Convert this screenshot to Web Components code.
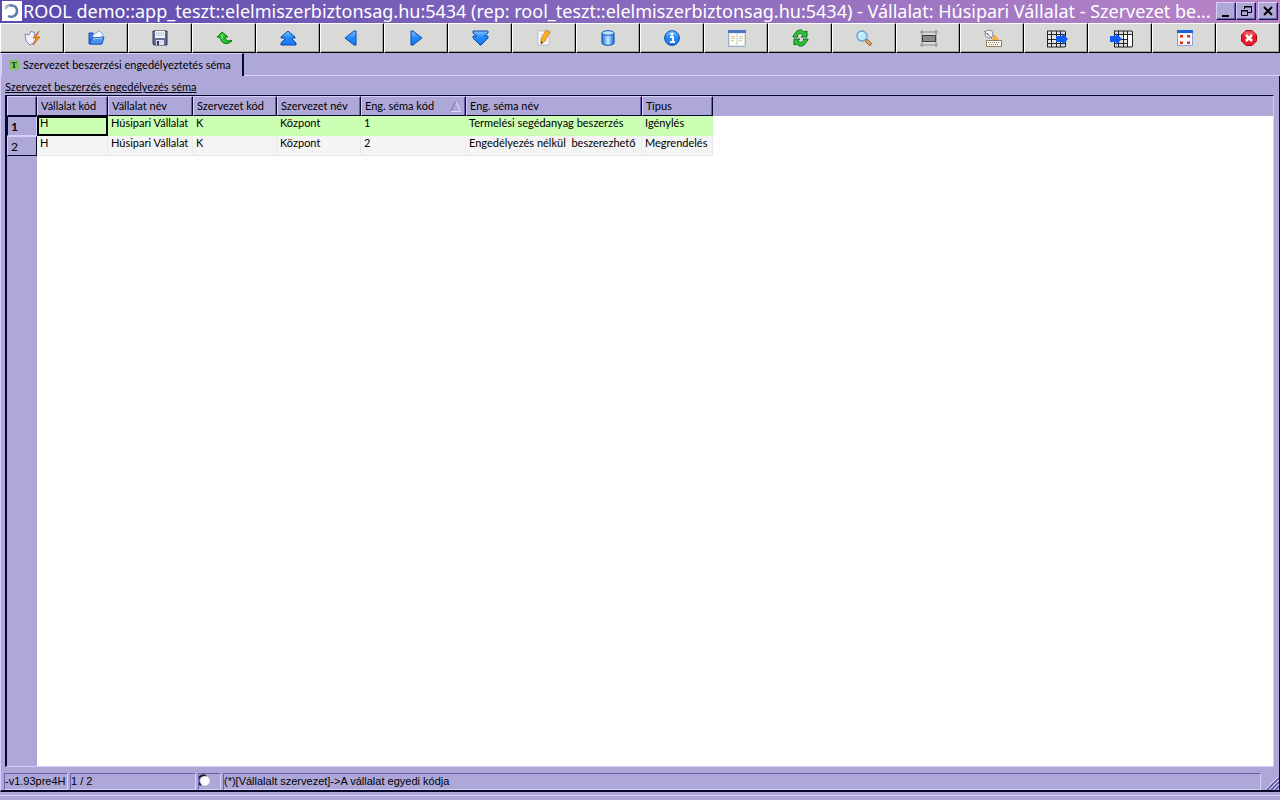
<!DOCTYPE html>
<html lang="hu">
<head>
<meta charset="utf-8">
<title>ROOL demo</title>
<style>
html, body { height: 100%; margin: 0; }
body {
  --face: #aea8d9; --light: #d6d0f8; --shade: #6a5fae; --dark: #08082c;
  font: 11px/14px Lato, "Liberation Sans", sans-serif; color: #000;
  background: var(--face);
}
</style>
</head>
<body>
<rool-app></rool-app>

<script>
const define = (name, css, html, setup) => {
  const tpl = document.createElement('template');
  tpl.innerHTML = `<style>*{box-sizing:border-box}${css}</style>${html}`;
  customElements.define(name, class extends HTMLElement {
    connectedCallback() {
      if (this.shadowRoot) return;
      this.attachShadow({ mode: 'open' }).append(tpl.content.cloneNode(true));
      if (setup) setup(this, this.shadowRoot);
    }
  });
};

/* 16px-high toolbar pictures */
const blue = 'fill="url(#b)" stroke="#0646b4"';
const sheetGrid = '<path d="M1 1h18v16H1z" fill="#dfe4e0"/><path d="M1 4.500h18M1 9.500h18M1 13.500h18M1 17h18M1 1h18M1.500 1v16M5.500 1v16M10.500 1v16M14.500 1v16M19.500 1v16" fill="none" stroke="#222" stroke-width="1"/>';
const icons = {
  connect: '<path d="M1 4l4 1 2-4 4 2-1 2 2 2-1 5-5 3-4-4z" fill="#eef0fc" stroke="#8088bc"/><path d="M15 1L9 8h3l-3 7 7-8h-4z" fill="#ff9818" stroke="#b85800" stroke-width=".7"/>',
  open: '<path d="M1 3h4l1 2h7v9H1z" fill="#3c78dc" stroke="#1c50b0"/><path d="M5 5l6-4 4 3-2 6H5z" fill="#f4f8ff" stroke="#8cb0e8"/><path d="M2 14l2-6 12-1-2 7z" fill="#4c94f0" stroke="#1858c0"/><path d="M5 9l9-1" stroke="#b4d8ff"/>',
  save: '<path d="M1 1h14v14H2l-1-1z" fill="#686c94" stroke="#30345c"/><path d="M3 1h10v7H3z" fill="#f0f2fa"/><path d="M4 3h8M4 5h8" stroke="#b8bcd0"/><path d="M4 10h8v5H4z" fill="#dcdfec"/><path d="M5 11h2v4H5z" fill="#34385c"/>',
  undo: '<path d="M6 2L1 7l3 .5C5 13 10 16 16 11l-1-1c-3 2-6 0-6-3h3z" fill="#28c030" stroke="#087818"/><path d="M6 4v5" stroke="#a0f090"/>',
  first: `<path d="M8 1l7 6v1h-3v1l4 4v2H1v-2l4-4V8H1V7z" ${blue}/>`,
  prev: `<path d="M12 1v14h-2L1 8l9-7z" ${blue}/>`,
  next: `<path d="M3 1v14h2l9-7-9-7z" ${blue}/>`,
  last: `<path d="M1 1h15v2l-4 3h4v2l-7 7H8L1 8V6h4L1 3z" ${blue}/>`,
  edit: '<path d="M2 1h11v14H2z" fill="#fafaff" stroke="#b4b8cc" stroke-width=".8"/><path d="M4 5h7M4 8h7M4 11h7" stroke="#ccd4e8"/><path d="M10 0l4 2-5 9-4 3v-5z" fill="#ffb020" stroke="#b87410" stroke-width=".7"/><path d="M5 14v-3l2 2z" fill="#333"/>',
  db: '<path d="M2 3v10c0 3 12 3 12 0V3z" fill="url(#c)" stroke="#0c50b4"/><ellipse cx="8" cy="3" rx="6" ry="2.3" fill="#b8e0ff" stroke="#1458bc"/>',
  info: '<circle cx="8" cy="8" r="7.4" fill="url(#b)" stroke="#104cac"/><circle cx="8" cy="4" r="1.6" fill="#fff"/><path d="M6 7h3v5M6 12h5" stroke="#fff" stroke-width="1.8" fill="none"/>',
  form: '<path d="M.5.5h17v16H.5z" fill="#dce2ea" stroke="#9cb0d0"/><path d="M0 0h18v3H0z" fill="#4c78c4"/><path d="M2 4h6v11H2zM10 4h6v11h-6z" fill="#fffef4"/><path d="M3 6.500h4M3 8.500h4M3 10.500h3M11 6.500h4M11 8.500h4M11 10.500h3" stroke="#d8c890"/>',
  refresh: '<path d="M1 6L5 1c3-2 6-1 7 1l3-1v6H9l2-2C9 3 7 3 5 6l1 1H1z" fill="#30c438" stroke="#08741c"/><path d="M16 10l-4 5c-3 2-6 1-7-1l-3 1V9h6l-2 2c2 2 4 2 6-1l-1-1h5z" fill="#30c438" stroke="#08741c"/>',
  find: '<circle cx="6" cy="6" r="5" fill="#bce8fc" stroke="#70a0d0" stroke-width="1.4"/><path d="M3 5l3-2" stroke="#fff"/><path d="M10 10l5 5" stroke="#8c5420" stroke-width="3.6"/><path d="M10.500 10.500l4 4" stroke="#f0b45c" stroke-width="1.8"/>',
  frame: '<path d="M0 2h18M0 15h18M2 0v17M16 0v17" stroke="#888ea4" stroke-width="1.2"/><path d="M2.500 5.500h13v6h-13z" fill="#8c8c8c" stroke="#3c3c3c"/>',
  tools: '<circle cx="5" cy="4" r="4" fill="#eef0f4" stroke="#8890a0"/><path d="M3 3l5 6M0 1l4 4" stroke="#777f90"/><path d="M10 4l5 6H8z" fill="#f4a838"/><path d="M2.500 10.500h15v6h-15z" fill="#fffdf0" stroke="#8c7c58"/><path d="M4 12.500h12M5 14.500h10" stroke="#777" stroke-dasharray="1 1"/>',
  exportgrid: sheetGrid + '<path d="M10 6h6V3l6 6-6 6v-3h-6z" fill="#0c5cf4"/>',
  importgrid: '<g transform="translate(3 0)">' + sheetGrid + '<path d="M11 5h3v4h-3M15 5h4v11h-4z" fill="#fff"/></g><path d="M0 6h6V3l6 6-6 6v-3H0z" fill="#0c5cf4"/>',
  full: '<path d="M.5.5h15v15H.5z" fill="#f4f6fc" stroke="#8ca0d8"/><path d="M0 0h16v3H0z" fill="#1c60dc"/><path d="M3 5h3v3L5 7 3 8zM13 5v3l-2-1-1 1V5zM3 14v-3l2 1 1-1v3zM13 14h-3v-3l1 1 2-1z" fill="#e02c20"/>',
  exit: '<path d="M5 .5h6L15.500 5v6L11 15.500H5L.5 11V5z" fill="#e81c2c" stroke="#a80c18"/><path d="M5 1.500h6L14 5H2z" fill="#f87880" opacity=".6"/><path d="M5 5l6 6M11 5l-6 6" stroke="#fff" stroke-width="2.6"/>'
};
const defs = '<defs><linearGradient id="b" x2="0" y2="1"><stop stop-color="#7cc4ff"/><stop offset=".5" stop-color="#2088fc"/><stop offset="1" stop-color="#1c78f0"/></linearGradient><linearGradient id="c"><stop stop-color="#1c70e0"/><stop offset=".5" stop-color="#c4ecff"/><stop offset="1" stop-color="#1868d8"/></linearGradient></defs>';

define('tool-button', `
  :host { display: block; min-width: 0; }
  button { display: flex; align-items: center; justify-content: center; width: 100%; height: 30px; margin: 0; padding: 1px 0 0 1px;
    background: #d9d9d8; border: 1px solid; border-color: #fff #000 #000 #fff; box-shadow: inset -1px -1px #a4a4a4; }
  svg { display: block; overflow: visible; }`,
  `<button type="button"></button>`,
  (el, root) => {
    const name = el.getAttribute('icon');
    const w = name.endsWith('grid') ? 22 : name === 'full' || name === 'exit' ? 16 : 17;
    const b = root.querySelector('button');
    b.setAttribute('aria-label', name);
    b.innerHTML = `<svg width="${w}" height="17" viewBox="0 0 ${w} 17" aria-hidden="true">${defs}${icons[name]}</svg>`;
  });

define('tool-bar', `
  :host { display: grid; grid-template-columns: repeat(20, 1fr); background: #000; }`,
  Object.keys(icons).map(n => `<tool-button icon="${n}"></tool-button>`).join(''));

define('title-bar', `
  :host { display: flex; align-items: center; height: 23px; padding: 0 2px 1px; color: #fff;
    background: linear-gradient(to right, #5a4aae, #8468bc 45%, #ba84c8); }
  .logo { flex: none; width: 20px; height: 20px; background: #fff; }
  h1 { flex: 1; min-width: 0; margin: 0 0 0 1px; font: 18px/22px "Noto Sans", sans-serif; white-space: nowrap; overflow: hidden; }
  .win { display: flex; flex: none; }
  button { width: 20px; height: 18px; padding: 0; display: flex; align-items: center; justify-content: center; background: var(--face);
    border: 1px solid; border-color: var(--light) #1c1844 #1c1844 var(--light); box-shadow: inset -1px -1px var(--shade); }
  .close { margin-left: 2px; }`,
  `<svg class="logo" viewBox="0 0 20 20" aria-hidden="true"><path d="M4 6C8 3 15 4 15 10c0 5-5 7-9 5" fill="none" stroke="#5c7ca8" stroke-width="2.500"/><path d="M3 8l4-4" stroke="#a8bcd4" stroke-width="2"/></svg>
   <h1><slot></slot></h1>
   <div class="win">
     <button type="button" aria-label="Kis méret"><svg width="12" height="12"><path d="M2 11h7" stroke="#000" stroke-width="2"/></svg></button>
     <button type="button" aria-label="Előző méret"><svg width="12" height="12"><path d="M4.500 4V1.500h7v6H8M4 2h8M1.500 5.500h6v5h-6zM1 6h7" fill="none" stroke="#000"/></svg></button>
     <button type="button" class="close" aria-label="Bezárás"><svg width="12" height="12"><path d="M2 2l8 8M10 2l-8 8" stroke="#000" stroke-width="2"/></svg></button>
   </div>`);

define('page-tabs', `
  :host { display: flex; height: 23px; }
  button { display: flex; align-items: center; gap: 4px; margin: 0; padding: 0 11px 1px 7px; font: inherit; color: inherit; background: none;
    border: solid; border-width: 1px 2px 0 1px; border-color: var(--light) var(--dark) var(--dark) var(--light); white-space: nowrap; }
  i { width: 10px; height: 10px; border-radius: 2px; background: #84c464; font: bold 9px/10px "Liberation Serif", serif; text-align: center; color: #10380c; }
  .rest { flex: 1; border-bottom: 1px solid var(--light); }`,
  `<button type="button" role="tab" aria-selected="true"><i>T</i><slot></slot></button><div class="rest"></div>`);

define('data-grid', `
  :host { display: block; flex: 1; min-height: 0; border: solid; border-width: 1px 1px 1px 2px;
    border-color: var(--dark) var(--light) var(--light) var(--dark);
    background: linear-gradient(to right, var(--face) 30px, #fff 30px); }
  table { width: 100%; table-layout: fixed; border-collapse: separate; border-spacing: 0; }
  th, td { height: 20px; padding: 0 0 0 3px; text-align: left; font-weight: normal; white-space: pre; overflow: hidden; vertical-align: top; }
  thead th { background: var(--face); vertical-align: middle; border: 1px solid;
    border-color: var(--light) var(--dark) var(--dark) var(--light); box-shadow: inset -1px 0 var(--shade); }
  thead .rest { border: 0; box-shadow: none; }
  .head { display: flex; align-items: center; justify-content: space-between; padding-right: 4px; }
  tbody th { padding-top: 3px; font-size: 12px; background: var(--face); border: 1px solid; border-color: var(--light) var(--dark) var(--dark) var(--light); }
  tbody .on th { font-weight: bold; border-color: var(--dark) var(--light) var(--light) var(--dark); }
  td { background: #f4f4f4; border: solid #e8e8e8; border-width: 0 1px 1px 0; }
  .on td { background: #ccffb4; border-color: #c8fab0; }
  .on td.cur { box-shadow: inset 0 0 0 2px #000; border: 0; }
  tbody td.rest { background: none; border: 0; }`,
  `<table><colgroup><col style="width:30px"><col style="width:71px"><col style="width:85px"><col style="width:84px"><col style="width:84px"><col style="width:105px"><col style="width:176px"><col style="width:71px"><col></colgroup>
   <thead><tr></tr></thead><tbody></tbody></table>`,
  (el, root) => {
    const cols = ['Vállalat kód', 'Vállalat név', 'Szervezet kód', 'Szervezet név', 'Eng. séma kód', 'Eng. séma név', 'Típus'];
    const rows = [
      ['H', 'Húsipari Vállalat', 'K', 'Központ', '1', 'Termelési segédanyag beszerzés', 'Igénylés'],
      ['H', 'Húsipari Vállalat', 'K', 'Központ', '2', 'Engedélyezés nélkül  beszerezhető', 'Megrendelés']
    ];
    const sort = '<svg width="11" height="11" aria-hidden="true"><path d="M.5 10.500L5.500.5l5 10H.5" fill="none" stroke="#e0dcff"/><path d="M.5 10.500L5.500.5" stroke="#6a5fae"/></svg>';
    root.querySelector('thead tr').innerHTML = '<th></th>' +
      cols.map((c, i) => `<th scope="col"><div class="head"><span>${c}</span>${i === 4 ? sort : ''}</div></th>`).join('') + '<th class="rest"></th>';
    root.querySelector('tbody').innerHTML = rows.map((r, i) =>
      `<tr class="${i ? '' : 'on'}"><th scope="row">${i + 1}</th>${r.map((v, j) => `<td class="${i || j ? '' : 'cur'}">${v}</td>`).join('')}<td class="rest"></td></tr>`).join('');
  });

define('status-bar', `
  :host { display: flex; gap: 2px; height: 23px; padding: 6px 18px 0 3px; font-family: "Liberation Sans", sans-serif; position: relative; }
  div { border: 1px solid; border-color: var(--shade) var(--light) var(--light) var(--shade); padding-left: 0; line-height: 15px; white-space: nowrap; }
  .ver { width: 64px; } .pos { width: 126px; } .led { width: 23px; } .msg { flex: 1; }
  .grip { position: absolute; right: 0; bottom: 0; }
  svg { display: block; }`,
  `<div class="ver">-v1.93pre4H</div><div class="pos">1 / 2</div>
   <div class="led"><svg width="16" height="15" aria-hidden="true"><path d="M2 11a5 5 0 0 1 5-9" fill="none" stroke="#222" stroke-width="2"/><circle cx="6" cy="7" r="4.700" fill="#fff"/></svg></div>
   <div class="msg"><slot></slot></div>
   <svg class="grip" width="13" height="13" aria-hidden="true"><path d="M1 13L13 1M5 13l8-8M9 13l4-4" stroke="#5a50a0" stroke-width="1.500"/><path d="M0 12L12 0M4 12l9-9M8 12l5-5" stroke="#e0dcff"/></svg>`);

define('rool-app', `
  :host { display: flex; flex-direction: column; min-height: 100vh; background: var(--face); }
  main { flex: 1; display: flex; flex-direction: column; border-left: 1px solid var(--light); border-bottom: 2px solid var(--dark); }
  .page { flex: 1; display: flex; flex-direction: column; border-right: 1px solid var(--dark); }
  .body { flex: 1; display: flex; flex-direction: column; padding: 4px 5px 0 4px; }
  h2 { margin: 0; height: 15px; font: inherit; text-decoration: underline; }
  .foot { height: 8px; padding-top: 3px; }
  .foot::before { content: ""; display: block; height: 1px; background: var(--light); }`,
  `<title-bar>ROOL demo::app_teszt::elelmiszerbiztonsag.hu:5434 (rep: rool_teszt::elelmiszerbiztonsag.hu:5434) - Vállalat: Húsipari Vállalat - Szervezet be...</title-bar>
   <tool-bar></tool-bar>
   <main>
     <page-tabs>Szervezet beszerzési engedélyeztetés séma</page-tabs>
     <div class="page">
       <div class="body"><h2>Szervezet beszerzés engedélyezés séma</h2><data-grid></data-grid></div>
       <status-bar>(*)[Vállalalt szervezet]-&gt;A vállalat egyedi kódja</status-bar>
     </div>
   </main>
   <div class="foot"></div>`);
</script>
</body>
</html>
